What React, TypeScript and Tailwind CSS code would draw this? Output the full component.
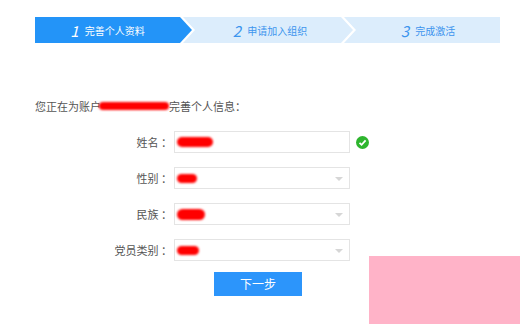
import React from 'react';

const steps = [
  { n: '1', label: '完善个人资料', active: true },
  { n: '2', label: '申请加入组织', active: false },
  { n: '3', label: '完成激活', active: false },
];

const Blob: React.FC<{ className: string }> = ({ className }) => (
  <span className={`inline-block rounded-full bg-[#ff0000] blur-[1px] ${className}`} />
);

const Caret = () => (
  <svg width="8" height="5" viewBox="0 0 8 5" className="absolute right-[6px] top-[9px]">
    <path d="M0 0 L8 0 L4 4 Z" fill="#d6d6d6" />
  </svg>
);

const Row: React.FC<{ label: string; blob: string; select?: boolean; ok?: boolean }> = ({
  label,
  blob,
  select,
  ok,
}) => (
  <div className="flex items-center">
    <div className="w-[139px] text-right text-[11px] text-[#555] pr-[1px]">{label}</div>
    <div className="relative ml-[1px] h-[22px] w-[176px] border border-[#e4e4e4] bg-white flex items-center pl-[2px]">
      <Blob className={blob} />
      {select && <Caret />}
    </div>
    {ok && (
      <svg width="13" height="13" viewBox="0 0 13 13" className="ml-[6px]">
        <circle cx="6.5" cy="6.5" r="6.5" fill="#2eb52e" />
        <path d="M3.5 6.8 L5.6 8.8 L9.6 4.4" stroke="#fff" strokeWidth="1.8" fill="none" />
      </svg>
    )}
  </div>
);

export default function App() {
  return (
    <div className="relative w-[520px] h-[324px] bg-white overflow-hidden font-['Noto_Sans_CJK_SC',sans-serif]">
      {/* Steps */}
      <div className="flex pt-[17px] pl-[35px]">
        <div className="flex h-[26px] w-[157px] items-center justify-center bg-[#2394f8] text-white [clip-path:polygon(0_0,calc(100%-12px)_0,100%_50%,calc(100%-12px)_100%,0_100%)] pr-[12px]">
          <span className="italic text-[15px] leading-none mr-[6px]">{steps[0].n}</span>
          <span className="text-[10px]">{steps[0].label}</span>
        </div>
        <div className="-ml-[9px] flex h-[26px] w-[170px] items-center justify-center bg-[#dcedfc] text-[#3d95ee] [clip-path:polygon(0_0,calc(100%-12px)_0,100%_50%,calc(100%-12px)_100%,0_100%,12px_50%)] pl-[4px]">
          <span className="italic text-[15px] leading-none mr-[6px]">{steps[1].n}</span>
          <span className="text-[10px]">{steps[1].label}</span>
        </div>
        <div className="-ml-[9px] flex h-[26px] w-[156px] items-center justify-center bg-[#dcedfc] text-[#3d95ee] [clip-path:polygon(0_0,100%_0,100%_100%,0_100%,12px_50%)] pl-[12px]">
          <span className="italic text-[15px] leading-none mr-[6px]">{steps[2].n}</span>
          <span className="text-[10px]">{steps[2].label}</span>
        </div>
      </div>

      {/* Intro */}
      <div className="mt-[55px] pl-[35px] flex items-center text-[11px] text-[#555] h-[16px]">
        <span>您正在为账户</span>
        <Blob className="w-[70px] h-[8px] -ml-[2px]" />
        <span>完善个人信息：</span>
      </div>

      {/* Form */}
      <div className="mt-[17px] pl-[34px] flex flex-col gap-[14px]">
        <Row label="姓名 ：" blob="w-[36px] h-[10px]" ok />
        <Row label="性别 ：" blob="w-[20px] h-[9px]" select />
        <Row label="民族 ：" blob="w-[28px] h-[11px]" select />
        <Row label="党员类别 ：" blob="w-[22px] h-[9px]" select />
      </div>

      <button className="ml-[214px] mt-[11px] h-[24px] w-[88px] bg-[#2c95fb] text-white text-[12px]">
        下一步
      </button>

      <div className="absolute left-[369px] top-[256px] w-[151px] h-[68px] bg-[#ffb3c8]" />
    </div>
  );
}
